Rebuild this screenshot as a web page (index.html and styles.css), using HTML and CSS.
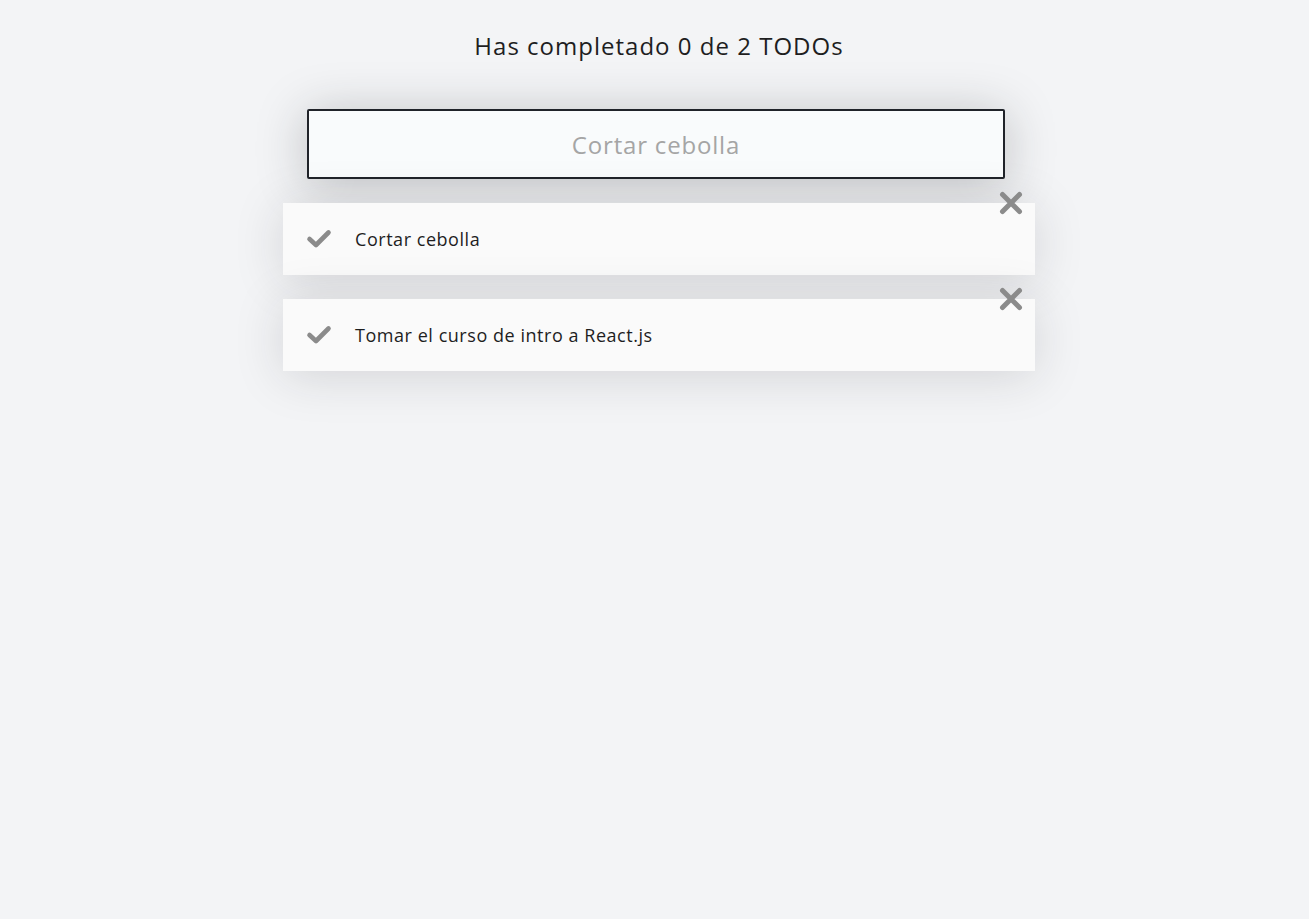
FILE: index.html
```html
<!DOCTYPE html>
<html lang="es">
<head>
<meta charset="utf-8">
<title>TODOs</title>
<link rel="stylesheet" href="styles.css">
</head>
<body>
<div class="app">
  <h2 class="counter">Has completado 0 de 2 TODOs</h2>
  <input class="search" placeholder="Cortar cebolla">
  <ul class="list">
    <li class="item">
      <span class="icon icon-check"><svg width="26" height="20" viewBox="0 0 26 20"><path d="M3.5 10 L10 16 L22.5 3.5" fill="none" stroke="#8b8b8b" stroke-width="4.6" stroke-linecap="round" stroke-linejoin="round"/></svg></span>
      <p class="item-p">Cortar cebolla</p>
      <span class="icon icon-delete"><svg width="26" height="26" viewBox="0 0 26 26"><path d="M4.5 4.5 L21.5 21.5 M21.5 4.5 L4.5 21.5" fill="none" stroke="#8b8b8b" stroke-width="5" stroke-linecap="round"/></svg></span>
    </li>
    <li class="item">
      <span class="icon icon-check"><svg width="26" height="20" viewBox="0 0 26 20"><path d="M3.5 10 L10 16 L22.5 3.5" fill="none" stroke="#8b8b8b" stroke-width="4.6" stroke-linecap="round" stroke-linejoin="round"/></svg></span>
      <p class="item-p">Tomar el curso de intro a React.js</p>
      <span class="icon icon-delete"><svg width="26" height="26" viewBox="0 0 26 26"><path d="M4.5 4.5 L21.5 21.5 M21.5 4.5 L4.5 21.5" fill="none" stroke="#8b8b8b" stroke-width="5" stroke-linecap="round"/></svg></span>
    </li>
  </ul>
</div>
</body>
</html>
```
FILE: styles.css
```css
* { box-sizing: border-box; }
body {
  margin: 0;
  background: #f3f4f6;
  font-family: "Open Sans", "Liberation Sans", sans-serif;
  color: #1e1e1f;
}
.app {
  width: 761px;
  margin: 0 auto;
  padding-left: 9px;
  display: flex;
  flex-direction: column;
}
.counter {
  margin: 0;
  padding: 31px 0 48px;
  font-size: 24px;
  line-height: 30px;
  font-weight: 400;
  letter-spacing: 0.042em;
  text-align: center;
}
.search {
  margin: 0 24px;
  width: 698px;
  height: 70px;
  background: #f9fbfc;
  border: 2px solid #202329;
  border-radius: 2px;
  font-family: inherit;
  font-size: 24px;
  letter-spacing: 0.034em;
  text-align: center;
  color: #1e1e1f;
  box-shadow: 0 5px 50px rgba(32, 35, 41, 0.25);
  outline: none;
}
.search::placeholder { color: #a5a5a5; }
.list {
  margin: 0;
  padding: 0 0 56px;
  list-style: none;
}
.item {
  position: relative;
  display: flex;
  justify-content: center;
  align-items: center;
  margin-top: 24px;
  background: #fafafa;
  box-shadow: 0 5px 50px rgba(32, 35, 41, 0.15);
}
.item-p {
  margin: 24px 0 24px 24px;
  width: calc(100% - 120px);
  font-size: 18px;
  line-height: 24px;
  letter-spacing: 0.03em;
}
.icon {
  position: absolute;
  display: flex;
  justify-content: center;
  align-items: center;
  width: 48px;
  height: 48px;
}
.icon-check { left: 12px; }
.icon-delete { top: -24px; right: 0; }
```
